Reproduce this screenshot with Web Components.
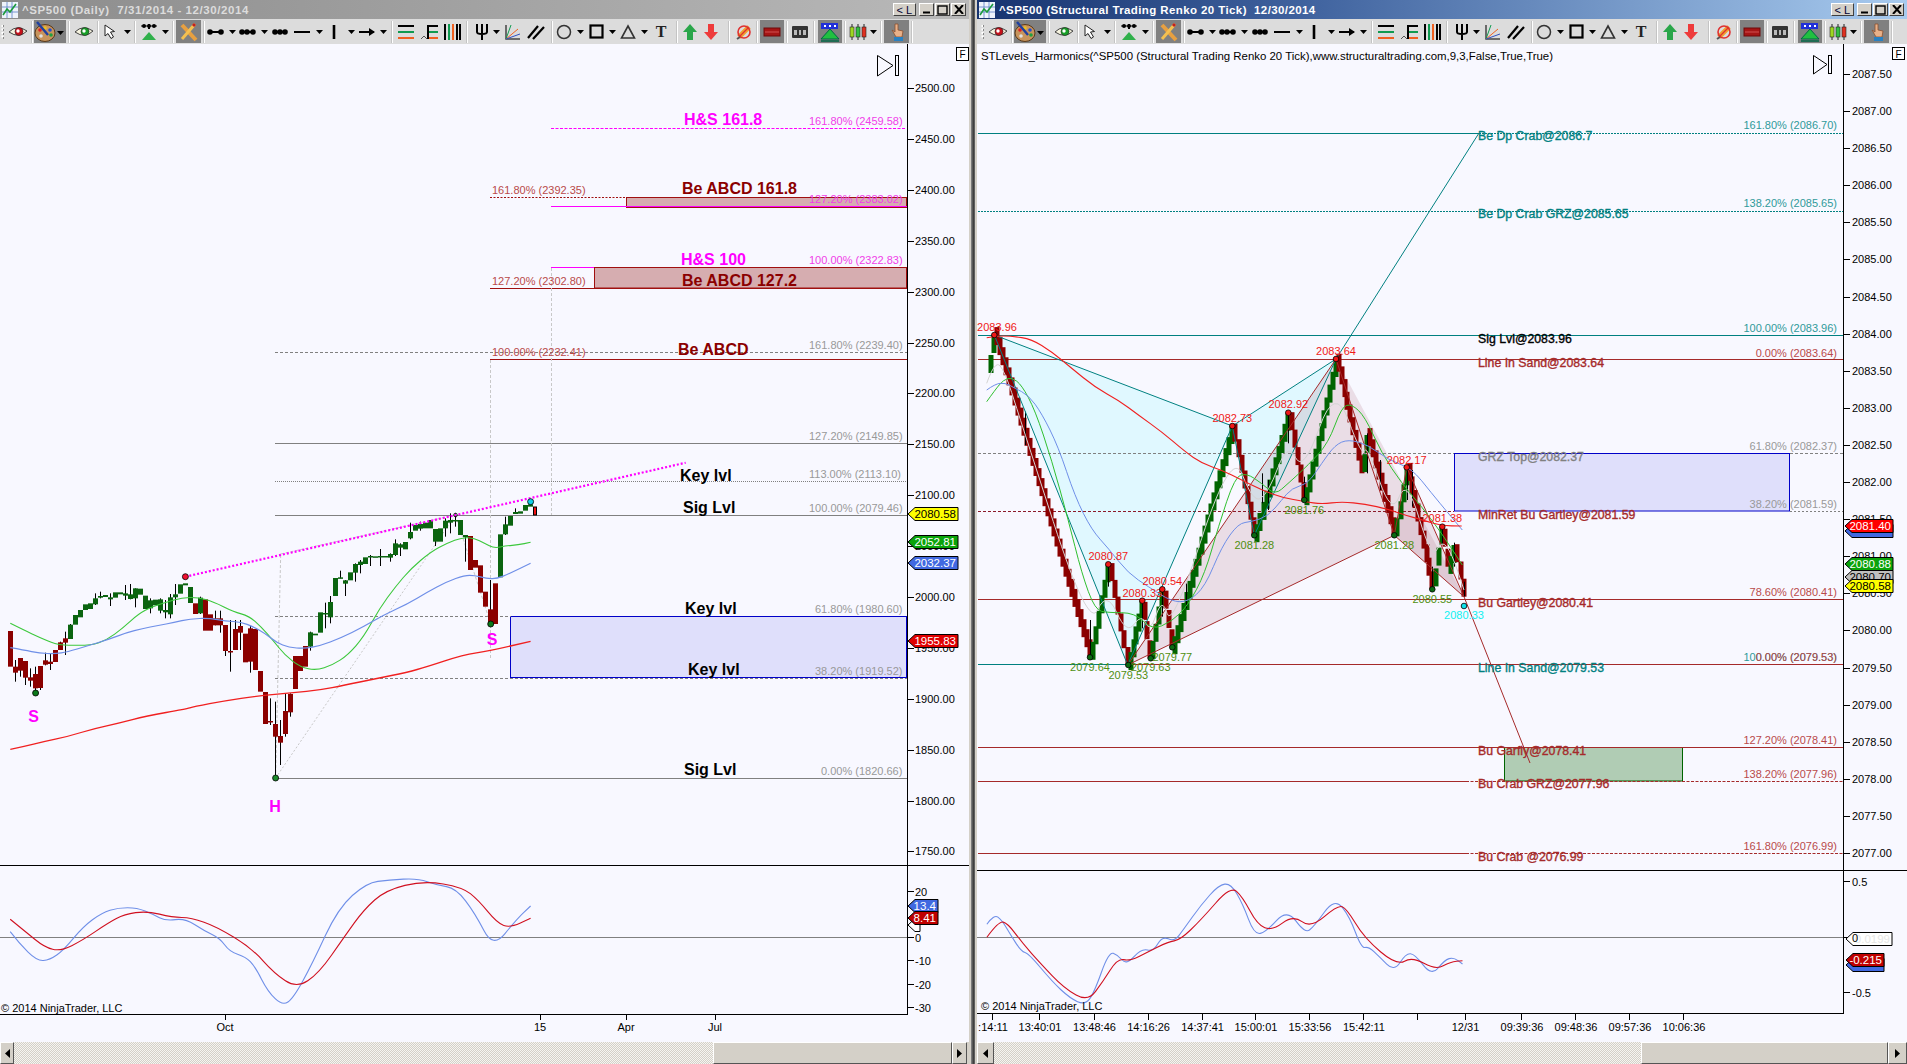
<!DOCTYPE html>
<html>
<head>
<meta charset="utf-8">
<title>NinjaTrader charts</title>
<style>
  html, body { margin: 0; height: 100%; overflow: hidden; }
  body {
    display: flex;
    width: 1907px;
    height: 1064px;
    background: #d4d0c8;
    font-family: "Liberation Sans", Arial, sans-serif;
  }
  .divider { width: 4px; background: linear-gradient(90deg, #8a8a8a, #3c3c3c 60%, #6e6e6e); }
  nt-window.left { width: 971px; padding-right: 2px; box-sizing: border-box; --cap-track: .58px; }
  nt-window.right { width: 932px; padding-left: 2px; box-sizing: border-box; --cap-track: .4px; }
  nt-toolbar.right { padding-left: 3px; }
</style>
</head>
<body>
  <nt-window class="left" caption="^SP500 (Daily)  7/31/2014 - 12/30/2014" inactive>
    <nt-toolbar slot="toolbar"></nt-toolbar>
    <daily-chart></daily-chart>
    <nt-scrollbar slot="scroll" before="14" track="699" thumb="239" after="15"></nt-scrollbar>
  </nt-window>
  <div class="divider"></div>
  <nt-window class="right" caption="^SP500 (Structural Trading Renko 20 Tick)  12/30/2014">
    <nt-toolbar slot="toolbar" class="right"></nt-toolbar>
    <renko-chart></renko-chart>
    <nt-scrollbar slot="scroll" before="17" track="647" thumb="247" after="19"></nt-scrollbar>
  </nt-window>

<script>
// svg helpers, everything on the charts is in page pixels
const FONT = '"Liberation Sans", Arial, sans-serif';
const esc = s => String(s).replace(/&/g, '&amp;').replace(/</g, '&lt;');
const text = (x, y, s, o = {}) =>
  `<text x="${x}" y="${y}" fill="${o.fill || '#000'}" font-size="${o.size || 11}" font-weight="${o.weight || 400}"` +
  ` text-anchor="${o.anchor || 'start'}"${o.stroke ? ` stroke="${o.fill}" stroke-width="${o.stroke}"` : ''}` +
  `${o.len ? ` textLength="${o.len}" lengthAdjust="spacingAndGlyphs"` : ''}>${esc(s)}</text>`;
const line = (x1, y1, x2, y2, c, w = 1, dash = '') =>
  `<line x1="${x1}" y1="${y1}" x2="${x2}" y2="${y2}" stroke="${c}" stroke-width="${w}"${dash ? ` stroke-dasharray="${dash}"` : ''}/>`;
const rect = (x, y, w, h, fill, stroke) =>
  `<rect x="${x}" y="${y}" width="${w}" height="${h}" fill="${fill}"${stroke ? ` stroke="${stroke}"` : ''}/>`;
const dot = (x, y, r, fill) => `<circle cx="${x}" cy="${y}" r="${r}" fill="${fill}" stroke="#000" stroke-width=".8"/>`;
const poly = (pts, fill) => `<polygon points="${pts.map(p => p.join(',')).join(' ')}" fill="${fill}"/>`;
// smooth line through the points, quadratic segments between midpoints
function curve(pts, c, w = 1.1) {
  let d = `M${pts[0][0]} ${pts[0][1]}`;
  for (let i = 1; i < pts.length - 1; i++) {
    const mx = (pts[i][0] + pts[i + 1][0]) / 2, my = (pts[i][1] + pts[i + 1][1]) / 2;
    d += `Q${pts[i][0]} ${pts[i][1]} ${mx} ${my}`;
  }
  const e = pts[pts.length - 1];
  d += `L${e[0]} ${e[1]}`;
  return `<path d="${d}" fill="none" stroke="${c}" stroke-width="${w}"/>`;
}
// price tag on the axis
function tag(x, y, w, label, bg, fg) {
  const t = y - 6.5, b = y + 6.5;
  return `<polygon points="${x},${y} ${x + 7},${t} ${x + w},${t} ${x + w},${b} ${x + 7},${b}" fill="${bg}" stroke="#000"/>` +
    text(x + w - 2, y + 4, label, { fill: fg, anchor: 'end', size: 11.5 });
}
function skipEnd(x, y, w, h, gap = 2.5) {
  return `<path d="M${x + .5} ${y + .5}L${x + w} ${y + h / 2}L${x + .5} ${y + h}Z" fill="#f8f8ff" stroke="#000"/>` +
    rect(x + w + gap, y + .5, 3, h - 1, '#f8f8ff', '#000');
}
const sheet = `:host{display:block;min-height:0;overflow:hidden;background:#f8f8ff}svg{display:block;font-family:${FONT}}`;

class NtWindow extends HTMLElement {
  constructor() {
    super();
    const shadow = this.attachShadow({ mode: 'open' });
    const idle = this.hasAttribute('inactive');
    shadow.innerHTML = `
      <style>
        :host { display: grid; grid-template-rows: 19px 25px 1fr 22px; background: #d4d0c8; min-width: 0; height: 1064px; }
        .title {
          display: flex; align-items: center; gap: 4px; padding: 0 3px 0 2px;
          background: ${idle ? 'linear-gradient(90deg,#8c8c8c,#b9b9b9)' : 'linear-gradient(90deg,#17336f 0%,#3f629e 35%,#a8cbef 100%)'};
        }
        .ico { width: 16px; height: 16px; flex: none; }
        .cap {
          flex: 1; white-space: pre; font: bold 11.5px ${FONT}; letter-spacing: var(--cap-track);
          color: ${idle ? '#dcdcdc' : '#fff'};
        }
        .btn {
          width: 15px; height: 13px; flex: none; box-sizing: border-box; background: #d4d0c8;
          border: 1px solid; border-color: #fff #404040 #404040 #fff; display: flex; align-items: center; justify-content: center;
        }
        .lk { width: 23px; margin-right: 2px; font: 11px ${FONT}; color: #003; justify-content: flex-end; padding-right: 3px; gap: 3px; }
        .btns { display: flex; gap: 1px; align-items: center; }
      </style>
      <div class="title">
        <svg class="ico" viewBox="0 0 16 16">
          <rect width="16" height="16" fill="#eef3fb"/>
          <path d="M0 5h16M0 10h16M5 0v16M10 0v16" stroke="#5a7ec8" stroke-width=".8"/>
          <path d="M1 13l4-6 3 3 6-8" fill="none" stroke="#1a9a3c" stroke-width="1.6"/>
        </svg>
        <div class="cap">${this.getAttribute('caption')}</div>
        <div class="btns">
          <div class="btn lk"><span>&lt;</span><span>L</span></div>
          <div class="btn"><svg width="9" height="9"><path d="M1 7.5h7" stroke="#000" stroke-width="2"/></svg></div>
          <div class="btn"><svg width="11" height="10"><rect x="1" y="1" width="9" height="8" fill="none" stroke="#000" stroke-width="1.4"/></svg></div>
          <div class="btn"><svg width="10" height="9"><path d="M1 0l8 9M9 0l-8 9" stroke="#000" stroke-width="2"/></svg></div>
        </div>
      </div>
      <slot name="toolbar"></slot>
      <slot></slot>
      <slot name="scroll"></slot>`;
  }
}

// toolbar icons, 20x18 box unless they say otherwise
const eye = (c) => `<svg width="20" height="14" viewBox="0 0 20 14"><path d="M1 7Q9-1 19 6Q11 14 1 7Z" fill="#f6f3df" stroke="#444"/><circle cx="11" cy="6.5" r="4" fill="${c}" stroke="#222" stroke-width=".6"/><circle cx="10" cy="6" r="1.7" fill="#fff"/></svg>`;
const dots = (pts, ln) => `<svg width="18" height="8"><path d="M${ln[0]} 4H${ln[1]}" stroke="#000" stroke-width="2"/>${pts.map(x => `<circle cx="${x}" cy="4" r="2.8"/>`).join('')}</svg>`;
const ICONS = {
  arrow: '<svg width="7" height="4"><path d="M0 0h7L3.5 4Z"/></svg>',
  grip: '<svg width="4" height="24"><path d="M1.5 5v14" stroke="#fff" stroke-width="2" stroke-dasharray="2 1.5"/><path d="M2.5 5v14" stroke="#888" stroke-dasharray="2 2"/></svg>',
  sep: '<div style="width:1px;height:22px;background:#fff;box-shadow:-1px 0 #c4c4c4"></div>',
  eyeRed: eye('#c8101a'),
  eyeGreen: eye('#18a028'),
  palette: `<svg width="32" height="22"><ellipse cx="11" cy="12" rx="10" ry="8.5" fill="#c8945c" stroke="#5b3a1a"/><circle cx="6" cy="9" r="1.8" fill="#e02020"/><circle cx="11" cy="7" r="1.8" fill="#e8c020"/><circle cx="16" cy="9" r="1.8" fill="#2050d0"/><circle cx="17" cy="14" r="1.8" fill="#20a040"/><circle cx="7" cy="15" r="1.8" fill="#e0e0e0"/><path d="M3 1l11 13" stroke="#2040a0" stroke-width="2.4"/><path d="M23 10h7l-3.500 4Z"/></svg>`,
  cursor: '<svg width="16" height="16"><path d="M2 1v11l3-2.500 3 5 2.500-1.500-3-5 4-.5Z" fill="#fff" stroke="#222"/></svg>',
  tri: '<svg width="18" height="18"><path d="M1 3h16" stroke="#000"/><circle cx="4" cy="3" r="2"/><circle cx="9" cy="3" r="2"/><circle cx="14" cy="3" r="2"/><path d="M9 1v5" stroke="#000" stroke-width="2"/><path d="M9 9l7 8H2Z" fill="#2fb04a"/></svg>',
  pencil: '<svg width="23" height="22"><path d="M5 4l14 15" stroke="#e8a040" stroke-width="4"/><path d="M18 3L5 18" stroke="#f4c050" stroke-width="3"/><path d="M18 3l-2 2" stroke="#c02020" stroke-width="3"/></svg>',
  d1: dots([3, 14], [3, 14]),
  d2: dots([3, 8, 14], [3, 14]),
  d3: dots([4, 9, 14], [4, 14]),
  dash: '<svg width="18" height="8"><path d="M1 4h16" stroke="#000" stroke-width="2"/></svg>',
  vert: '<svg width="4" height="18"><path d="M2 2v14" stroke="#000" stroke-width="2.600"/></svg>',
  right: '<svg width="18" height="10"><path d="M1 5h15" stroke="#000" stroke-width="2"/><path d="M11 1l6 4-6 4Z"/></svg>',
  fib: '<svg width="18" height="16"><path d="M1 2h16" stroke="#000" stroke-width="2"/><path d="M1 8h16" stroke="#0f9a50" stroke-width="2"/><path d="M1 14h16" stroke="#ef6020" stroke-width="2"/></svg>',
  efan: '<svg width="20" height="16"><path d="M8 2h10" stroke="#000" stroke-width="2"/><path d="M8 8h10" stroke="#0f9a50" stroke-width="2"/><path d="M8 14h10" stroke="#ef6020" stroke-width="2"/><path d="M8 1v14" stroke="#000" stroke-width="2"/><path d="M1 15l3-3 3 3" fill="none" stroke="#555"/></svg>',
  bars: '<svg width="18" height="16"><path d="M2 0v16M14 0v16M17 0v16" stroke="#000" stroke-width="2"/><path d="M6 0v16" stroke="#0f9a50" stroke-width="2"/><path d="M10 0v16" stroke="#ef6020" stroke-width="2"/></svg>',
  fork: '<svg width="14" height="16"><path d="M2 0v8q0 2 5 2t5-2V0M7 0v16" fill="none" stroke="#000" stroke-width="2"/></svg>',
  fan: '<svg width="16" height="16"><path d="M1 1v14h14" fill="none" stroke="#444" stroke-width="1.500"/><path d="M1 15L6 1" stroke="#0f9a50"/><path d="M1 15L13 5" stroke="#ef6020"/><path d="M1 15L15 10" stroke="#3050c0"/></svg>',
  para: '<svg width="18" height="16"><path d="M1 14L11 2M6 15L17 3" stroke="#000" stroke-width="2.200"/></svg>',
  circle: '<svg width="16" height="16"><circle cx="8" cy="8" r="6.500" fill="none" stroke="#333" stroke-width="1.500"/></svg>',
  square: '<svg width="15" height="15"><rect x="1.500" y="1.500" width="12" height="12" fill="none" stroke="#000" stroke-width="2.200"/></svg>',
  triangle: '<svg width="16" height="15"><path d="M8 2l6.500 12h-13Z" fill="none" stroke="#333" stroke-width="1.600"/></svg>',
  t: `<span style="font:bold 16px 'Liberation Serif',serif;color:#222">T</span>`,
  up: '<svg width="14" height="16"><path d="M7 0l7 8H10v8H4V8H0Z" fill="#2aa64a"/></svg>',
  down: '<svg width="14" height="16"><path d="M7 16L0 8H4V0h6v8h4Z" fill="#ee3b3b"/></svg>',
  no: '<svg width="16" height="16"><path d="M3 13L13 3" stroke="#f0a030" stroke-width="5"/><circle cx="8" cy="8" r="6" fill="none" stroke="#e03030" stroke-width="1.600"/><path d="M3 13L13 3" stroke="#e03030" stroke-width="1.200"/><path d="M1 15l3-2" stroke="#555" stroke-width="2"/></svg>',
  redbar: '<svg width="24" height="22"><rect x="4" y="7" width="16" height="8" fill="#a51515" stroke="#6e0a0a"/><path d="M5 11h14" stroke="#d05050"/></svg>',
  counter: '<svg width="16" height="12"><rect width="16" height="12" rx="1" fill="#333"/><path d="M2 4h3v5H2zM7 4h2v5H7zM11 4h3v5h-3z" fill="#bbb"/></svg>',
  pyramid: '<svg width="24" height="22"><rect x="3" y="2" width="17" height="6" fill="#2030d8"/><path d="M6 4h2v2H6zM11 4h2v2h-2zM16 4h2v2h-2z" fill="#fff"/><path d="M12 8l9 10H3Z" fill="#20c040" stroke="#064" /><path d="M3 20h18" stroke="#064" stroke-width="1.500"/></svg>',
  candles: '<svg width="18" height="16"><path d="M3 0v16M9 0v16M15 0v16" stroke="#222"/><rect x="1" y="3" width="4" height="10" fill="#9ed820" stroke="#222" stroke-width=".6"/><rect x="7" y="3" width="4" height="10" fill="#30c040" stroke="#222" stroke-width=".6"/><rect x="13" y="3" width="4" height="10" fill="#e03020" stroke="#222" stroke-width=".6"/></svg>',
  hand: '<svg width="24" height="22"><path d="M10 3v8l-3-2 4 7h6l1-6-5-1V3Z" fill="#e8b088" stroke="#8a5030" stroke-width=".8"/><rect x="9" y="16" width="9" height="4" fill="#2a80c0"/></svg>'
};
// name, width of its box, pressed
const TOOLS = [
  ['grip', 5], ['eyeRed', 25], ['sep', 4], ['palette', 32, 1], ['sep', 6], ['eyeGreen', 24], ['sep', 4],
  ['cursor', 22], ['arrow', 10], ['sep', 6], ['tri', 22], ['arrow', 10], ['sep', 6], ['pencil', 25, 1], ['sep', 6],
  ['d1', 18], ['arrow', 14], ['d2', 18], ['arrow', 14], ['d3', 18], ['dash', 25], ['arrow', 10], ['vert', 20], ['arrow', 14],
  ['right', 18], ['arrow', 14], ['sep', 5], ['fib', 22], ['efan', 26], ['bars', 18], ['sep', 13], ['fork', 16], ['arrow', 12],
  ['fan', 22], ['para', 24], ['sep', 8], ['circle', 16], ['arrow', 16], ['square', 16], ['arrow', 16], ['triangle', 16], ['arrow', 16],
  ['t', 18], ['sep', 14], ['up', 12], ['down', 30], ['sep', 6], ['no', 23], ['sep', 5], ['redbar', 24, 1], ['sep', 6], ['counter', 20],
  ['sep', 8], ['pyramid', 24, 1], ['sep', 6], ['candles', 20], ['arrow', 10], ['sep', 6], ['hand', 25, 1], ['sep', 6]
];
class NtToolbar extends HTMLElement {
  constructor() {
    super();
    const shadow = this.attachShadow({ mode: 'open' });
    const items = TOOLS.map(([n, w, on]) => `<div class="it${on ? ' on' : ''}" style="width:${w}px">${ICONS[n]}</div>`).join('');
    shadow.innerHTML = `
      <style>
        :host { display: flex; align-items: center; height: 25px; background: #dcdcdc; box-sizing: border-box; }
        .it { display: flex; align-items: center; justify-content: center; height: 23px; flex: none; }
        .on { background: #808080; }
        svg { display: block; overflow: visible; flex: none; }
      </style>${items}`;
  }
}

class NtScrollbar extends HTMLElement {
  constructor() {
    super();
    const shadow = this.attachShadow({ mode: 'open' });
    const a = n => this.getAttribute(n);
    shadow.innerHTML = `
      <style>
        :host { display: flex; height: 22px; background: #d4d0c8; }
        .b { box-sizing: border-box; border: 1px solid; border-color: #fff #555 #555 #fff; background: #d4d0c8; display: flex; align-items: center; justify-content: center; flex: none; }
        .track { background: repeating-conic-gradient(#d4d0c8 0 25%, #f6f5f1 0 50%) 0 0 / 2px 2px; flex: none; }
      </style>
      <div class="b" style="width:${a('before')}px"><svg width="5" height="9"><path d="M5 0v9L0 4.500Z"/></svg></div>
      <div class="track" style="width:${a('track')}px"></div>
      <div class="b" style="width:${a('thumb')}px"></div>
      <div class="b" style="width:${a('after')}px"><svg width="5" height="9"><path d="M0 0v9l5-4.500Z"/></svg></div>`;
  }
}

class DailyChart extends HTMLElement {
  constructor() {
    super();
    const shadow = this.attachShadow({ mode: 'open' });
    const z = ([x, y]) => [+(x / 2.529).toFixed(1), +(480 + y / 3).toFixed(1)];
    const z7 = ([x, y]) => [+(x / 1.568).toFixed(1), +(860 + y / 3).toFixed(1)];
    const RED = '#8b0000', GRN = '#0b6410', MAR = '#a01010', MAG = '#ff00ff', GRY = '#808080';
    let s = '';

    // zones and levels
    s += rect(510.5, 616.5, 396, 61, '#dfdffb', '#0000c8');
    s += rect(626.5, 197.5, 280, 10, '#d6adb0', MAR);
    s += rect(594.5, 267.5, 312, 20.5, '#d6adb0', MAR);
    s += line(551, 128.5, 906, 128.5, MAG, 1, '3 1.500');
    s += line(490, 197.5, 627, 197.5, MAR, 1, '2 1.500');
    s += line(551, 206.5, 907, 206.5, MAG);
    s += line(551, 267.5, 594, 267.5, MAG);
    s += line(490, 288.5, 907, 288.5, MAR);
    s += line(275, 352.5, 907, 352.5, GRY, 1, '3 2');
    s += line(490, 359.5, 907, 359.5, MAR);
    s += line(275, 443.5, 907, 443.5, GRY);
    s += line(275, 481.5, 906, 481.5, GRY, 1, '1 1');
    s += line(275, 515.5, 907, 515.5, GRY);
    s += line(275, 616.5, 511, 616.5, GRY, 1, '3 2');
    s += line(275, 678.5, 907, 678.5, GRY, 1, '3 2');
    s += line(275, 778.5, 907, 778.5, GRY);

    // helper lines of the patterns
    s += line(490.5, 360, 490.5, 660, '#c8c8c8', 1, '3 2');
    s += line(551.5, 268, 551.5, 515, '#c8c8c8', 1, '3 2');
    s += line(275.6, 778, 280.7, 554, '#c8c8c8', 1, '3 2');
    s += line(275.6, 778, 455.5, 515, '#c8c8c8', 1, '2 2');
    s += line(280.7, 554, 455.5, 515, '#c8c8c8', 1, '3 2');
    s += line(455.5, 515, 490.7, 624, '#c8c8c8', 1, '3 2');

    // candles: colour, body top, body bottom, wick top, wick bottom, in rows of 13 zoomed units
    const C = [
      'r,453,560','r,560,578,540,605','r,534,572,534,590','r,543,593,543,615','r,592,602,565,620','r,582,625,560,640','r,558,624,558,630','r,541,554,518,556',
      'r,545,552,520,570','r,510,546,510,546','r,487,510,485,510','r,475,488,455,525','g,434,477,432,477','g,405,434','g,390,412','g,373,390','g,370,387','g,355,373,340,375',
      'g,348,353,335,355','g,345,351','g,352,358,340,378','g,337,353','g,337,343','g,340,347,315,360','g,343,357,312,358','g,325,355,325,382','g,326,344',
      'g,347,387','g,361,385,355,400','g,359,376','g,358,392,355,400','g,390,397,360,415','g,352,403,342,415','g,343,352,312,375','g,313,341','g,310,316','g,321,369',
      'r,370,402','g,353,400,350,402','r,358,452','r,403,452','r,415,436,392,436','r,415,436,392,458','r,435,513,435,528','r,513,515,420,575','r,447,510,420,510','r,438,458,420,510',
      'r,461,547','r,445,545,438,578','r,447,570','r,573,635','r,636,732','r,723,725,655,735','r,732,770,665,890','r,768,788,720,855','r,693,762,640,770','r,642,697,640,710',
      'r,528,627','r,528,573','r,498,560','g,457,500,455,512','g,461,466','g,397,458','g,399,403,368,445','g,366,412,348,430','g,294,348','g,292,295,272,295','g,301,311,300,348','g,277,301',
      'g,252,278,250,305','g,245,255,240,280','g,232,252','g,228,232,225,258','g,229,231','g,228,230,207,258','g,228,230','g,222,233,220,245','g,190,225,178,228','g,193,203,190,228','g,186,208',
      'g,156,175,128,178','g,135,152','g,132,146,125,152','g,128,145','g,120,145','g,147,185,147,198','g,145,185','g,122,145,115,170','g,120,128,100,160','g,120,122,100,140','g,120,165',
      'g,165,172,165,245','r,168,270','r,240,263','r,256,338','r,335,380','r,388,430,300,435','r,310,432','g,163,292','g,133,163,110,165','g,108,137','g,96,102,85,102','g,94,101','g,75,92','g,73,80,60,75'
    ];
    C.forEach((row, i) => {
      const p = row.split(','), x = Math.round((26 + 12.65 * i) / 2.529), c = p[0] === 'r' ? RED : GRN;
      const t = 480 + p[1] / 3, b = 480 + p[2] / 3;
      if (p[3]) s += `<rect x="${x}" y="${480 + p[3] / 3}" width="1" height="${(p[4] - p[3]) / 3}" fill="#000"/>`;
      s += `<rect x="${x - 2}" y="${t}" width="5" height="${Math.max(b - t, 1.5)}" fill="${c}"/>`;
    });
    s += rect(533.5, 507, 3, 8, '#f01010', '#000');

    // moving averages
    const green = [[26,430],[60,450],[100,472],[140,493],[170,496],[230,496],[270,480],[310,445],[350,402],[385,380],[420,367],[460,353],[500,352],[540,365],[590,395],[630,408],[660,440],[690,480],[720,525],[760,562],[800,571],[840,556],[880,525],[920,470],[960,385],[1000,320],[1040,265],[1090,215],[1130,190],[1170,172],[1200,175],[1225,190],[1250,205],[1280,197],[1310,195],[1342,187]];
    const blue = [[26,503],[60,510],[100,520],[140,521],[170,516],[220,498],[270,480],[320,458],[360,446],[400,436],[440,428],[480,416],[530,415],[570,423],[610,426],[640,440],[670,460],[700,488],[730,502],[770,506],[810,497],[860,475],[920,440],[970,405],[1030,372],[1080,337],[1130,305],[1175,286],[1200,286],[1230,295],[1255,297],[1290,280],[1342,250]];
    const redMa = [[26,808],[60,800],[110,785],[170,770],[240,745],[300,730],[370,708],[470,687],[490,680],[570,662],[650,648],[740,638],[810,630],[870,616],[950,596],[1030,577],[1080,560],[1170,525],[1240,512],[1342,484]];
    s += curve(green.map(z), '#3cc83c');
    s += curve(blue.map(z), '#6f8fe8', 1.2);
    s += curve(redMa.map(z), '#f02020', 1.3);

    // trend line and pivots
    s += line(185.4, 576.7, 685.7, 462.7, MAG, 2.2, '2 2');
    s += dot(185.4, 576.7, 3, '#f01030');
    s += dot(35.6, 693, 3, '#0a7a1a');
    s += dot(275.6, 778, 3, '#1a8a2a');
    s += dot(490.7, 624, 3, '#0a7a1a');
    s += dot(455.5, 515, 1.800, 'none');
    s += dot(530.6, 501.7, 3, '#10d0e8');
    s += text(33.6, 722, 'S', { fill: MAG, size: 16, weight: 700, anchor: 'middle' });
    s += text(275, 812, 'H', { fill: MAG, size: 16, weight: 700, anchor: 'middle' });
    s += text(492, 645, 'S', { fill: MAG, size: 16, weight: 700, anchor: 'middle' });

    // big level names
    const big = (x, y, t, fill) => text(x, y, t, { fill, size: 16, weight: 700 });
    s += big(684, 125, 'H&S 161.8', MAG);
    s += big(682, 194, 'Be ABCD 161.8', RED);
    s += big(681, 265, 'H&S 100', MAG);
    s += big(682, 286, 'Be ABCD 127.2', RED);
    s += big(678, 355, 'Be ABCD', RED);
    s += big(680, 481, 'Key lvl', '#000');
    s += big(683, 513, 'Sig Lvl', '#000');
    s += big(685, 614, 'Key lvl', '#000');
    s += big(688, 675, 'Key lvl', '#000');
    s += big(684, 775, 'Sig Lvl', '#000');

    // fib labels
    const fib = (x, y, t, fill) => text(x, y, t, { fill, size: 11 });
    const F = [[809,125,'161.80% (2459.58)','#f040e8'],[492,194,'161.80% (2392.35)','#b84a4a'],[809,203,'127.20% (2383.02)','#f040e8'],[809,264,'100.00% (2322.83)','#f040e8'],[492,285,'127.20% (2302.80)','#b84a4a'],
      [809,349,'161.80% (2239.40)','#999'],[492,356,'100.00% (2232.41)','#b84a4a'],[809,440,'127.20% (2149.85)','#999'],[809,478,'113.00% (2113.10)','#999'],[809,512,'100.00% (2079.46)','#999'],[815,613,'61.80% (1980.60)','#999'],[815,675,'38.20% (1919.52)','#999'],[821,775,'0.00% (1820.66)','#999']];
    F.forEach(f => s += fib(...f));

    // price axis
    s += line(907.5, 44, 907.5, 1014, '#000');
    s += line(0, 865.5, 969, 865.5, '#000');
    s += line(0, 1014.5, 908, 1014.5, '#000');
    for (let p = 2500; p >= 1750; p -= 50) {
      const y = Math.round(139 + (2450 - p) * 1.0178);
      s += line(907, y + .5, 914, y + .5, '#000') + text(915, y + 4, p.toFixed(2));
    }
    s += skipEnd(877, 55, 16, 21);
    s += rect(956.5, 47.5, 12, 13, '#fff', '#000') + text(962.5, 58, 'F', { anchor: 'middle', size: 10 });

    // lower pane
    s += line(0, 937.5, 907, 937.5, GRY);
    const bl = [[16,215],[30,250],[58,303],[78,300],[100,270],[130,200],[160,158],[185,143],[215,143],[240,163],[260,183],[290,175],[320,212],[345,235],[360,275],[385,290],[400,320],[420,395],[443,437],[460,415],[490,310],[530,145],[575,68],[610,60],[655,55],[685,75],[715,85],[745,160],[773,265],[810,178],[832,138]];
    const rd = [[16,178],[40,215],[70,262],[95,274],[130,240],[170,188],[195,163],[230,153],[270,172],[300,173],[340,200],[395,265],[430,340],[465,385],[500,340],[540,230],[570,150],[605,90],[665,62],[725,82],[750,120],[780,190],[800,203],[832,175]];
    s += curve(bl.map(z7), '#6f8fe8', 1.1) + curve(rd.map(z7), '#d01020', 1.1);
    [[892,'20'],[938,'0'],[961,'-10'],[985,'-20'],[1008,'-30']].forEach(([y, l]) => {
      s += line(907, y - .5, 914, y - .5, '#000') + text(915, y + 4, l);
    });
    s += text(1, 1012, '© 2014 NinjaTrader, LLC', { size: 11 });
    [[225,'Oct'],[540,'15'],[626,'Apr'],[715,'Jul']].forEach(([x, l]) => {
      s += line(x + .5, 1014, x + .5, 1020, '#000') + text(x, 1031, l, { anchor: 'middle', size: 11 });
    });

    // tags go over the axis labels
    s += tag(908, 514, 50, '2080.58', '#ffff00', '#000');
    s += tag(908, 563, 50, '2032.37', '#4169e1', '#fff');
    s += tag(908, 542, 50, '2052.81', '#0aa30a', '#fff');
    s += tag(908, 641, 50, '1955.83', '#e00000', '#fff');
    s += tag(908, 925, 12, '', '#fff', '#000');
    s += tag(908, 906, 30, '13.4', '#4169e1', '#fff');
    s += tag(908, 918, 30, '8.41', '#c00000', '#fff');

    shadow.innerHTML = `<style>${sheet}</style><svg width="969" height="998" viewBox="0 44 969 998">${s}</svg>`;
  }
}

class RenkoChart extends HTMLElement {
  constructor() {
    super();
    const shadow = this.attachShadow({ mode: 'open' });
    const z = ([x, y]) => [+(975 + x / 3).toFixed(1), +(300 + y / 3).toFixed(1)];
    const z8 = ([x, y]) => [+(975 + x / 1.682).toFixed(1), +(860 + y / 3).toFixed(1)];
    const RED = '#8b0000', GRN = '#006400', BRN = '#a52a2a', TEAL = '#008080', GRY = '#808080';
    let s = '';

    // harmonic patterns
    const X = z([58,105]), A = z([458,1095]), B = z([772,378]), C = z([838,706]), D = z([1083,177]), E = z([1258,706]), F = z([1295,502]), G = z([1467,890]);
    s += poly([X, A, B], '#e0f8ff') + poly([B, C, D], '#e0f8ff');
    s += poly([A, D, E], 'rgba(150,60,80,.14)') + poly([D, E, G], 'rgba(150,60,80,.14)') + poly([E, F, G], 'rgba(150,60,80,.12)');

    // zones
    s += rect(1454.5, 453.5, 335, 57.5, '#dfdffb', '#0000c8');
    s += rect(1504.5, 747.5, 178, 33.500, '#b0ccb4', GRN);

    // levels
    const lv = (y, c, x1, x2, d) => line(x1, y, x2, y, c, 1, d);
    s += lv(133.5, TEAL, 978, 1479) + lv(133.5, TEAL, 1479, 1843, '2 1');
    s += lv(211.5, TEAL, 978, 1843, '2 1');
    s += lv(335.5, TEAL, 978, 1843);
    s += lv(359.5, BRN, 978, 1843);
    s += lv(453.5, GRY, 978, 1454, '3 2') + lv(453.5, GRY, 1790, 1843, '3 2');
    s += lv(511.5, '#8b1a2a', 978, 1454, '3 2') + lv(511.5, GRY, 1790, 1843, '2 2');
    s += lv(599.5, BRN, 978, 1843);
    s += lv(664.5, TEAL, 978, 1128) + lv(664.5, BRN, 1128, 1843);
    s += lv(747.5, BRN, 978, 1843);
    s += lv(781.5, BRN, 978, 1466) + lv(781.5, BRN, 1466, 1843, '3 1.500');
    s += lv(853.5, BRN, 978, 1466) + lv(853.5, BRN, 1466, 1843, '3 1.500');

    // renko bricks along the swing legs
    const legs = [[40,225],[58,105],[345,1072],[400,793],[458,1095],[502,902],[525,1075],[562,868],[592,1042],[772,378],[838,706],[940,338],[988,600],[1083,177],[1160,520],[1177,405],[1258,706],[1295,502],[1372,868],[1402,680],[1420,800],[1436,735],[1467,890]].map(z);
    const wicks = [[150,335,435],[345,960,1072],[400,793,860],[502,902,985],[562,868,950],[632,850,925],[860,520,610],[880,540,630],[940,338,430],[988,530,600],[1176,400,520],[1215,480,570],[1295,502,600],[1310,510,620],[1372,800,868],[1402,680,730],[1436,728,800],[1467,845,890]];
    for (let i = 1; i < legs.length; i++) {
      const [x0, y0] = legs[i - 1], [x1, y1] = legs[i], up = y1 < y0;
      const n = Math.max(1, Math.round((x1 - x0) / 3));
      for (let k = 1; k <= n; k++) {
        const x = Math.round(x0 + (x1 - x0) * k / n), y = y0 + (y1 - y0) * k / n;
        const top = up ? y : y - 18;
        s += `<rect x="${x - 2.5}" y="${top.toFixed(1)}" width="5" height="18" fill="${up ? GRN : RED}"/>`;
      }
    }
    wicks.forEach(([x, a, b]) => { s += line(975.5 + Math.round(x / 3), 300 + a / 3, 975.5 + Math.round(x / 3), 300 + b / 3, '#000'); });

    // pattern outlines go over the bricks
    const seg = (a, b, c) => line(a[0], a[1], b[0], b[1], c, 1);
    s += seg(X, B, TEAL) + seg(X, A, TEAL) + seg(A, B, TEAL) + seg(B, C, TEAL) + seg(C, D, TEAL) + seg(B, D, TEAL) + seg(D, [1479, 133], TEAL);
    s += seg(A, D, BRN) + seg(D, E, BRN) + seg(A, E, BRN) + seg(E, F, BRN) + seg(F, G, BRN) + seg(E, G, BRN) + seg(G, [1530, 763], BRN);

    // averages
    const gr = [[35,250],[60,180],[90,215],[130,340],[340,990],[395,870],[455,1005],[500,940],[525,1000],[562,890],[590,990],[770,440],[835,610],[880,580],[938,425],[985,520],[1080,250],[1160,470],[1177,435],[1250,650],[1295,530],[1370,780],[1400,720],[1430,760],[1467,870]];
    const rd = [[35,113],[60,108],[110,108],[170,118],[230,155],[290,205],[360,262],[430,300],[490,345],[560,395],[630,455],[680,490],[740,510],[800,540],[860,570],[920,592],[990,605],[1040,612],[1100,605],[1170,612],[1240,628],[1290,645],[1350,662],[1400,677],[1460,678]];
    const bl = [[35,270],[60,252],[90,248],[120,265],[160,285],[200,340],[250,440],[300,590],[350,690],[400,745],[460,820],[520,860],[590,905],[640,905],[690,860],[740,740],[790,670],[830,665],[880,648],[920,600],[950,565],[1000,550],[1040,490],[1080,435],[1120,418],[1180,435],[1240,480],[1310,505],[1370,580],[1420,640],[1462,690]];
    const gn = [[35,305],[60,270],[85,240],[110,232],[140,255],[180,330],[230,480],[280,660],[320,820],[360,930],[400,938],[480,938],[530,990],[590,965],[640,915],[690,820],[730,680],[780,530],[815,520],[860,550],[900,585],[940,550],[1000,495],[1060,430],[1100,320],[1130,312],[1170,350],[1220,460],[1280,550],[1340,620],[1400,700],[1462,795]];
    s += curve(gr.map(z), '#d4d4d4', 1) + curve(gn.map(z), '#30c030', 1) + curve(bl.map(z), '#6f8fe8', 1) + curve(rd.map(z), '#f02020', 1.1);

    // pivots and their prices
    const up = [[58,105,'2083.96',80],[400,793,'2080.87',768],[502,902,'2080.33',878],[562,868,'2080.54',843],[772,378,'2082.73',354],[940,338,'2082.92',312],[1083,177,'2083.64',153],[1295,502,'2082.17',480],[1402,680,'2081.38',654]];
    const dn = [[345,1072,'2079.64',1102],[460,1095,'2079.53',1125],[527,1075,'2079.63',1102],[592,1042,'2079.77',1070],[838,706,'2081.28',735],[988,600,'2081.76',630],[1258,706,'2081.28',735],[1372,868,'2080.55',897]];
    const pv = (list, col, tc) => list.forEach(([x, y, l, ty]) => {
      const p = z([x, y]);
      s += dot(p[0], p[1], 2.800, col);
      // first pivot sits on the chart edge, keep its price inside
      s += text(Math.max(p[0], 997), 300 + ty / 3 + 4, l, { fill: tc, anchor: 'middle', size: 11 });
    });
    pv(up, '#f01818', '#f01818');
    pv(dn, '#0a6a12', '#4f8f10');
    s += dot(1464, 606, 2.800, '#10e0e8') + text(1464, 619, '2080.33', { fill: '#10f0f0', anchor: 'middle', size: 11 });

    // level names, drawn heavy like the platform does
    const names = [[140,'Be Dp Crab@2086.7',TEAL],[218,'Be Dp Crab GRZ@2085.65',TEAL],[343,'Sig Lvl@2083.96','#000'],[367,'Line In Sand@2083.64',BRN],[461,'GRZ Top@2082.37',GRY],[519,'MinRet Bu Gartley@2081.59',BRN],
      [607,'Bu Gartley@2080.41',BRN],[672,'Line In Sand@2079.53',TEAL],[755,'Bu Garfly@2078.41',BRN],[788,'Bu Crab GRZ@2077.96',BRN],[861,'Bu Crab @2076.99',BRN]];
    names.forEach(([y, t, c]) => { s += text(1478, y, t, { fill: c, size: 12.3, stroke: .35 }); });
    const fibs = [[129,'161.80% (2086.70)','#2f9a9a'],[207,'138.20% (2085.65)','#2f9a9a'],[332,'100.00% (2083.96)','#2f9a9a'],[357,'0.00% (2083.64)','#b84a4a'],[450,'61.80% (2082.37)','#999'],[508,'38.20% (2081.59)','#999'],
      [596,'78.60% (2080.41)','#b84a4a'],[661,'100.00% (2079.53)','#2f9a9a'],[661,'0.00% (2079.53)','#b84a4a'],[744,'127.20% (2078.41)','#b84a4a'],[778,'138.20% (2077.96)','#b84a4a'],[850,'161.80% (2076.99)','#b84a4a']];
    fibs.forEach(([y, t, c]) => { s += text(1837, y, t, { fill: c, size: 11, anchor: 'end' }); });

    s += text(981, 60, 'STLevels_Harmonics(^SP500 (Structural Trading Renko 20 Tick),www.structuraltrading.com,9,3,False,True,True)', { size: 11, len: 572 });
    s += skipEnd(1813, 55, 14, 19, 1.5);
    s += rect(1892.5, 47.5, 12, 12, '#fff', '#000') + text(1898.5, 57.5, 'F', { anchor: 'middle', size: 10 });

    // axis
    s += line(1843.5, 44, 1843.5, 1013, '#000');
    s += line(977, 870.5, 1907, 870.5, '#000');
    s += line(977, 1013.5, 1844, 1013.5, '#000');
    for (let p = 2087.5; p >= 2077; p -= .5) {
      const y = Math.round(853 + (2077 - p) * 74.2);
      s += line(1843, y + .5, 1850, y + .5, '#000') + text(1852, y + 4, p.toFixed(2));
    }

    // lower pane
    s += line(977, 937.5, 1843, 937.5, GRY);
    const mb = [[20,193],[32,163],[45,180],[60,225],[78,275],[90,280],[130,365],[160,415],[185,435],[200,400],[225,275],[240,285],[255,315],[280,265],[300,275],[315,228],[335,245],[350,210],[380,135],[410,75],[430,70],[450,130],[470,225],[490,215],[525,147],[555,220],[570,200],[605,113],[630,170],[650,265],[662,260],[680,290],[705,335],[725,280],[740,283],[768,348],[790,300],[805,292],[820,312]];
    const mr = [[20,232],[40,183],[55,190],[80,250],[110,310],[150,385],[190,425],[215,365],[240,295],[260,303],[290,277],[325,245],[345,240],[380,180],[430,78],[450,110],[475,195],[500,212],[535,165],[565,205],[610,135],[625,145],[655,235],[710,317],[735,290],[775,330],[800,305],[820,302]];
    s += curve(mb.map(z8), '#6f8fe8', 1.1) + curve(mr.map(z8), '#d01020', 1.1);
    [[882,'0.5'],[993,'-0.5']].forEach(([y, l]) => { s += line(1843, y - .5, 1850, y - .5, '#000') + text(1852, y + 4, l); });
    s += line(1843, 937.5, 1850, 937.5, '#000');
    s += text(981, 1010, '© 2014 NinjaTrader, LLC', { size: 11 });
    [[993,':14:11'],[1040,'13:40:01'],[1094.5,'13:48:46'],[1148.6,'14:16:26'],[1202.6,'14:37:41'],[1256,'15:00:01'],[1310,'15:33:56'],[1364,'15:42:11'],[1418,''],[1465.5,'12/31'],[1522,'09:39:36'],[1576,'09:48:36'],[1630,'09:57:36'],[1684,'10:06:36']].forEach(([x, l]) => {
      s += line(Math.round(x) - .5, 1013, Math.round(x) - .5, 1020, '#000');
      if (l) s += text(x, 1031, l, { anchor: 'middle', size: 11 });
    });

    // tags
    s += tag(1845, 531, 48, '', '#4169e1', '#fff');
    s += tag(1845, 526, 48, '2081.40', '#ff0000', '#fff');
    s += tag(1845, 564, 48, '2080.88', '#0aa30a', '#fff');
    s += tag(1845, 577, 48, '2080.70', '#c0c0c0', '#000');
    s += tag(1845, 586, 48, '2080.58', '#ffff00', '#000');
    s += tag(1846, 939, 46, '0.0199', '#fff', '#e6e6e6');
    s += text(1852, 942, '0');
    s += tag(1846, 965, 38, '', '#4169e1', '#fff');
    s += tag(1846, 960, 38, '-0.215', '#c00000', '#fff');

    shadow.innerHTML = `<style>${sheet}</style><svg width="930" height="998" viewBox="977 44 930 998">${s}</svg>`;
  }
}

customElements.define('nt-window', NtWindow);
customElements.define('nt-toolbar', NtToolbar);
customElements.define('nt-scrollbar', NtScrollbar);
customElements.define('daily-chart', DailyChart);
customElements.define('renko-chart', RenkoChart);
</script>
</body>
</html>
